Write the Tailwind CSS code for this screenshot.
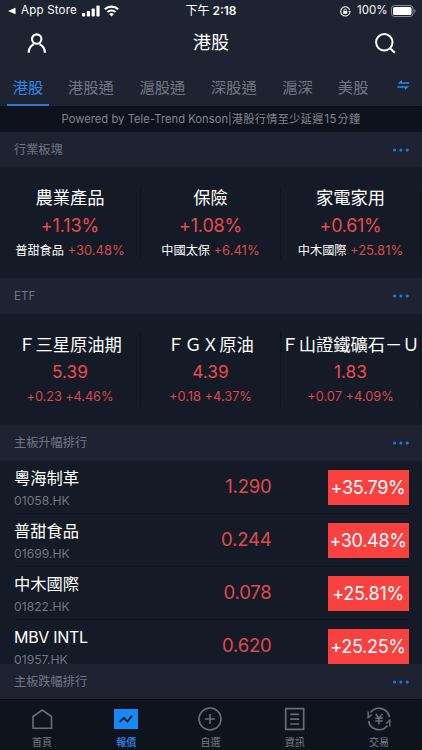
<!DOCTYPE html>
<html lang="zh-Hant">
<head>
    <meta charset="UTF-8">
    <meta name="viewport" content="width=device-width, initial-scale=1.0">
    <title>港股</title>
    <script src="https://cdn.jsdelivr.net/npm/@tailwindcss/browser@4"></script>
    <style>
        body {
            font-family: Inter, 'Noto Sans CJK TC', sans-serif;
        }
    </style>
</head>
<body class="bg-[#141a26] text-white w-[422px] h-[750px] overflow-hidden flex flex-col whitespace-nowrap">
    <!-- Status bar -->
    <div class="shrink-0 h-[22px] bg-[#1e2331] grid grid-cols-[160px_102px_160px] items-center text-[11.5px]">
        <div class="flex items-center pl-2">
            <svg class="w-2 h-2 mr-[5px]" viewBox="0 0 8 8" fill="white"><path d="M0 4 7.500 .7v6.600z"/></svg>
            <span class="w-[57px] tracking-[0.22px]">App Store</span>
            <svg class="w-[18px] h-3 ml-1" viewBox="0 0 18 12" fill="white">
                <rect x="0" y="8" width="3.2" height="3.5" rx=".8"/>
                <rect x="4.8" y="6" width="3.2" height="5.5" rx=".8"/>
                <rect x="9.6" y="3.5" width="3.2" height="8" rx=".8"/>
                <rect x="14.4" y="0.5" width="3.2" height="11" rx=".8"/>
            </svg>
            <svg class="w-[15px] h-3 ml-1" viewBox="0 0 15 12" fill="none" stroke="white" stroke-width="2.1">
                <path d="M.8 4.300a9.600 9.600 0 0 1 13.400 0"/>
                <path d="M3.400 7.100a5.900 5.900 0 0 1 8.200 0"/>
                <path d="M7.500 11.600 5.200 9.300a3.200 3.200 0 0 1 4.600 0z" fill="white" stroke="none"/>
            </svg>
        </div>
        <div class="text-center font-semibold text-[12px]"><span class="font-normal">下午</span> 2:18</div>
        <div class="flex items-center justify-end pr-[6px]">
            <svg class="w-[11px] h-[11px] mr-[6px]" viewBox="0 0 11 11" fill="none" stroke="white">
                <path d="M9.700 6.800A4.600 4.600 0 1 1 9.700 4" stroke-width="1.1"/>
                <path d="M8.200 5h2.800L9.700 7z" fill="white" stroke="none"/>
                <rect x="3.200" y="5" width="4" height="2.800" fill="white" stroke="none"/>
                <path d="M4 5V4.200a1.200 1.200 0 0 1 2.400 0V5" stroke-width=".8"/>
            </svg>
            <span class="w-[31px] mr-[3px]">100%</span>
            <svg class="w-[25px] h-3" viewBox="0 0 25 12">
                <rect x=".5" y=".5" width="21.5" height="11" rx="3" fill="none" stroke="#8b8e96"/>
                <rect x="2" y="2" width="18.5" height="8" rx="1.6" fill="white"/>
                <path d="M23.300 4v4a2.200 2.200 0 0 0 0-4z" fill="#8b8e96"/>
            </svg>
        </div>
    </div>

    <!-- Title bar -->
    <header class="shrink-0 h-[42px] bg-[#1e2331] flex items-center justify-between px-[26px]">
        <svg class="w-[21px] h-[21px]" viewBox="0 0 21 21" fill="none" stroke="white" stroke-width="2.1">
            <circle cx="10.700" cy="6.100" r="4.700"/>
            <path d="M2.700 19.700c0-4.200 2-7 5-8.500M18.900 19.700c0-4.200-2.300-7-5.300-8.500"/>
        </svg>
        <h1 class="text-[18px] leading-6">港股</h1>
        <svg class="w-[21px] h-[21px]" viewBox="0 0 21 21" fill="none" stroke="white" stroke-width="2">
            <circle cx="9.300" cy="9.300" r="8.200"/>
            <path d="m15 15.200 4.800 4.600"/>
        </svg>
    </header>

    <!-- Market tabs -->
    <nav class="shrink-0 h-[42px] bg-[#1e2331] flex pl-[7px] text-[15.3px] leading-[47px] text-[#717682]">
        <a class="w-[42px] text-center text-[#3186e8] border-b-2 border-[#2b78d4] mr-[19px]">港股</a>
        <a class="mr-[25.5px]">港股通</a>
        <a class="mr-[25.5px]">滬股通</a>
        <a class="mr-[25.5px]">深股通</a>
        <a class="mr-[25px]">滬深</a>
        <a>美股</a>
        <svg class="w-[13px] h-[13px] ml-[28.5px] mt-[15px]" viewBox="0 0 13 13" fill="#3186e8">
            <path d="M.5 4.700 4.900.7v2.500h7.300v1.500H.5zM12.300 7.200 8 11V8.700H.5V7.200h11.800z"/>
        </svg>
    </nav>

    <div class="shrink-0 h-[26px] bg-[#0e121d] text-center text-[11.2px] leading-[26px] text-[#83868f] tracking-[0.28px]"><span class="tracking-[0.04px]">Powered by Tele-Trend Konson|</span>港股行情至少延遲<span class="mx-px">15</span>分鐘</div>

    <!-- Industry sectors -->
    <div class="shrink-0 h-[35px] bg-[#1e2331] flex items-center justify-between pl-[14px] pr-[13px] text-[12.2px] text-[#717682]">
        <span class="pt-0.5">行業板塊</span>
        <svg class="w-4 h-1" viewBox="0 0 16 4" fill="#2e74c6"><circle cx="1.6" cy="2" r="1.6"/><circle cx="7.8" cy="2" r="1.6"/><circle cx="14.2" cy="2" r="1.6"/></svg>
    </div>
    <section class="shrink-0 h-[111px] grid grid-cols-[141px_140px_140px] py-[19px] text-center">
        <div class="border-r border-[#0e131d] flex flex-col items-center">
            <div class="text-[17.3px] leading-6">農業產品</div>
            <div class="text-[18px] leading-8 text-[#e94b50] tracking-[-0.1px]">+1.13%</div>
            <div class="text-[12.2px] leading-4">普甜食品 <span class="text-[13px] text-[#d9484e]">+30.48%</span></div>
        </div>
        <div class="border-r border-[#0e131d] flex flex-col items-center">
            <div class="text-[17.3px] leading-6">保險</div>
            <div class="text-[18px] leading-8 text-[#e94b50] tracking-[-0.2px]">+1.08%</div>
            <div class="text-[12.2px] leading-4">中國太保 <span class="text-[13px] text-[#d9484e]">+6.41%</span></div>
        </div>
        <div class="border-r border-[#0e131d] flex flex-col items-center">
            <div class="text-[17.3px] leading-6">家電家用</div>
            <div class="text-[18px] leading-8 text-[#e94b50] tracking-[-0.3px]">+0.61%</div>
            <div class="text-[12.2px] leading-4">中木國際 <span class="text-[13px] text-[#d9484e]">+25.81%</span></div>
        </div>
    </section>

    <!-- ETF -->
    <div class="shrink-0 h-[36px] bg-[#1e2331] flex items-center justify-between pl-[14px] pr-[13px] text-[12.2px] text-[#717682]">
        <span class="text-[11.6px] pt-0.5">ETF</span>
        <svg class="w-4 h-1" viewBox="0 0 16 4" fill="#2e74c6"><circle cx="1.6" cy="2" r="1.6"/><circle cx="7.8" cy="2" r="1.6"/><circle cx="14.2" cy="2" r="1.6"/></svg>
    </div>
    <section class="shrink-0 h-[111px] grid grid-cols-[141px_140px_140px] py-[18px] text-center">
        <div class="border-r border-[#0e131d] flex flex-col items-center">
            <div class="text-[17.3px] leading-[25px]">Ｆ三星原油期</div>
            <div class="text-[17.3px] leading-[30px] text-[#e94b50]">5.39</div>
            <div class="text-[12.8px] leading-[19px] text-[#d9484e] tracking-[-0.1px]">+0.23 +4.46%</div>
        </div>
        <div class="border-r border-[#0e131d] flex flex-col items-center">
            <div class="text-[17.3px] leading-[25px]">ＦＧＸ原油</div>
            <div class="text-[17.3px] leading-[30px] text-[#e94b50]">4.39</div>
            <div class="text-[12.8px] leading-[19px] text-[#d9484e]">+0.18 +4.37%</div>
        </div>
        <div class="border-r border-[#0e131d] flex flex-col items-center">
            <div class="text-[17.3px] leading-[25px]">Ｆ山證鐵礦石－Ｕ</div>
            <div class="text-[17.3px] leading-[30px] text-[#e94b50]">1.83</div>
            <div class="text-[12.8px] leading-[19px] text-[#d9484e]">+0.07 +4.09%</div>
        </div>
    </section>

    <!-- Main board gainers -->
    <div class="shrink-0 h-[36px] bg-[#1e2331] flex items-center justify-between pl-[14px] pr-[13px] text-[12.2px] text-[#717682]">
        <span class="pt-px">主板升幅排行</span>
        <svg class="w-4 h-1" viewBox="0 0 16 4" fill="#2e74c6"><circle cx="1.6" cy="2" r="1.6"/><circle cx="7.8" cy="2" r="1.6"/><circle cx="14.2" cy="2" r="1.6"/></svg>
    </div>
    <section class="shrink-0 h-[203px] overflow-hidden pl-[14px] pr-[13.5px]">
        <div class="h-[53px] border-b border-[#10151f] grid grid-cols-[150px_1fr_81px] items-center">
            <div class="pt-1">
                <div class="text-[16.3px] leading-[23px]">粵海制革</div>
                <div class="text-[12.2px] leading-[22px] text-[#717682]">01058.HK</div>
            </div>
            <div class="text-right pr-[56px] text-[18.5px] text-[#e0494e] tracking-[-0.2px]">1.290</div>
            <div class="h-[35px] bg-[#f9423f] text-center text-[18px] leading-[35px] tracking-[-0.3px]">+35.79%</div>
        </div>
        <div class="h-[53px] border-b border-[#10151f] grid grid-cols-[150px_1fr_81px] items-center">
            <div class="pt-1">
                <div class="text-[16.3px] leading-[23px]">普甜食品</div>
                <div class="text-[12.2px] leading-[22px] text-[#717682]">01699.HK</div>
            </div>
            <div class="text-right pr-[56px] text-[18.5px] text-[#e0494e] tracking-[-0.2px]">0.244</div>
            <div class="h-[35px] bg-[#f9423f] text-center text-[18px] leading-[35px] tracking-[-0.3px]">+30.48%</div>
        </div>
        <div class="h-[53px] border-b border-[#10151f] grid grid-cols-[150px_1fr_81px] items-center">
            <div class="pt-1">
                <div class="text-[16.3px] leading-[23px]">中木國際</div>
                <div class="text-[12.2px] leading-[22px] text-[#717682]">01822.HK</div>
            </div>
            <div class="text-right pr-[56px] text-[18.5px] text-[#e0494e] tracking-[-0.2px]">0.078</div>
            <div class="h-[35px] bg-[#f9423f] text-center text-[18px] leading-[35px] tracking-[-0.3px]">+25.81%</div>
        </div>
        <div class="h-[53px] border-b border-[#10151f] grid grid-cols-[150px_1fr_81px] items-center">
            <div class="pt-1">
                <div class="text-[16px] leading-[23px] tracking-[-0.3px]">MBV INTL</div>
                <div class="text-[12.2px] leading-[22px] text-[#717682]">01957.HK</div>
            </div>
            <div class="text-right pr-[56px] text-[18.5px] text-[#e0494e] tracking-[-0.2px]">0.620</div>
            <div class="h-[35px] bg-[#f9423f] text-center text-[18px] leading-[35px] tracking-[-0.3px]">+25.25%</div>
        </div>
    </section>

    <!-- Main board losers -->
    <div class="shrink-0 h-[35px] bg-[#1e2331] flex items-center justify-between pl-[14px] pr-[13px] text-[12.2px] text-[#717682]">
        <span class="pt-0.5">主板跌幅排行</span>
        <svg class="w-4 h-1" viewBox="0 0 16 4" fill="#2e74c6"><circle cx="1.6" cy="2" r="1.6"/><circle cx="7.8" cy="2" r="1.6"/><circle cx="14.2" cy="2" r="1.6"/></svg>
    </div>

    <!-- Bottom navigation -->
    <nav class="shrink-0 h-[51px] bg-[#0f131d] border-t border-[#080b12] grid grid-cols-5 pt-[7px] pr-px text-[10px] leading-[14px] text-[#7b7f88]">
        <a class="flex flex-col items-center gap-1">
            <svg class="w-6 h-6" viewBox="0 0 24 24" fill="none" stroke="#696d76" stroke-width="1.6"><path d="M3 9.500 12.300 3l9.200 6.500v11.800H3z"/></svg>
            <span>首頁</span>
        </a>
        <a class="flex flex-col items-center gap-1 text-[#2d89ee] font-medium">
            <svg class="w-6 h-6" viewBox="0 0 24 24"><path d="M0 2h24v20H0z" fill="#168af2"/><path d="m5.600 15 4.400-4.200 3.400 3.800L18 8.600" fill="none" stroke="#0f1a2c" stroke-width="1.8"/></svg>
            <span>報價</span>
        </a>
        <a class="flex flex-col items-center gap-1">
            <svg class="w-6 h-6" viewBox="0 0 24 24" fill="none" stroke="#696d76" stroke-width="1.6"><circle cx="12" cy="12" r="11"/><path d="M12 7v10M7 12h10"/></svg>
            <span>自選</span>
        </a>
        <a class="flex flex-col items-center gap-1">
            <svg class="w-6 h-6" viewBox="0 0 24 24" fill="none" stroke="#696d76" stroke-width="1.7"><path d="M2.700 1.700h18v20.600h-18zM7.200 7.300h9M7.200 12.200h9M7.200 17h9"/></svg>
            <span>資訊</span>
        </a>
        <a class="flex flex-col items-center gap-1">
            <svg class="w-6 h-6" viewBox="0 0 24 24" fill="none" stroke="#696d76" stroke-width="1.700">
                <path d="M3.500 5.500A10.700 10.700 0 0 1 22.500 10M20.500 18.500A10.700 10.700 0 0 1 1.500 14"/>
                <path d="M1.200 4.500v6.200L4.800 7.500M22.800 19.500v-6.200L19.200 16.500" stroke-width="1.500"/>
                <path d="m8.700 7 3.300 4.200L15.300 7M8.200 11.300h7.600M8.200 14h7.600M12 11v6.500" stroke-width="1.500"/>
            </svg>
            <span>交易</span>
        </a>
    </nav>
</body>
</html>
